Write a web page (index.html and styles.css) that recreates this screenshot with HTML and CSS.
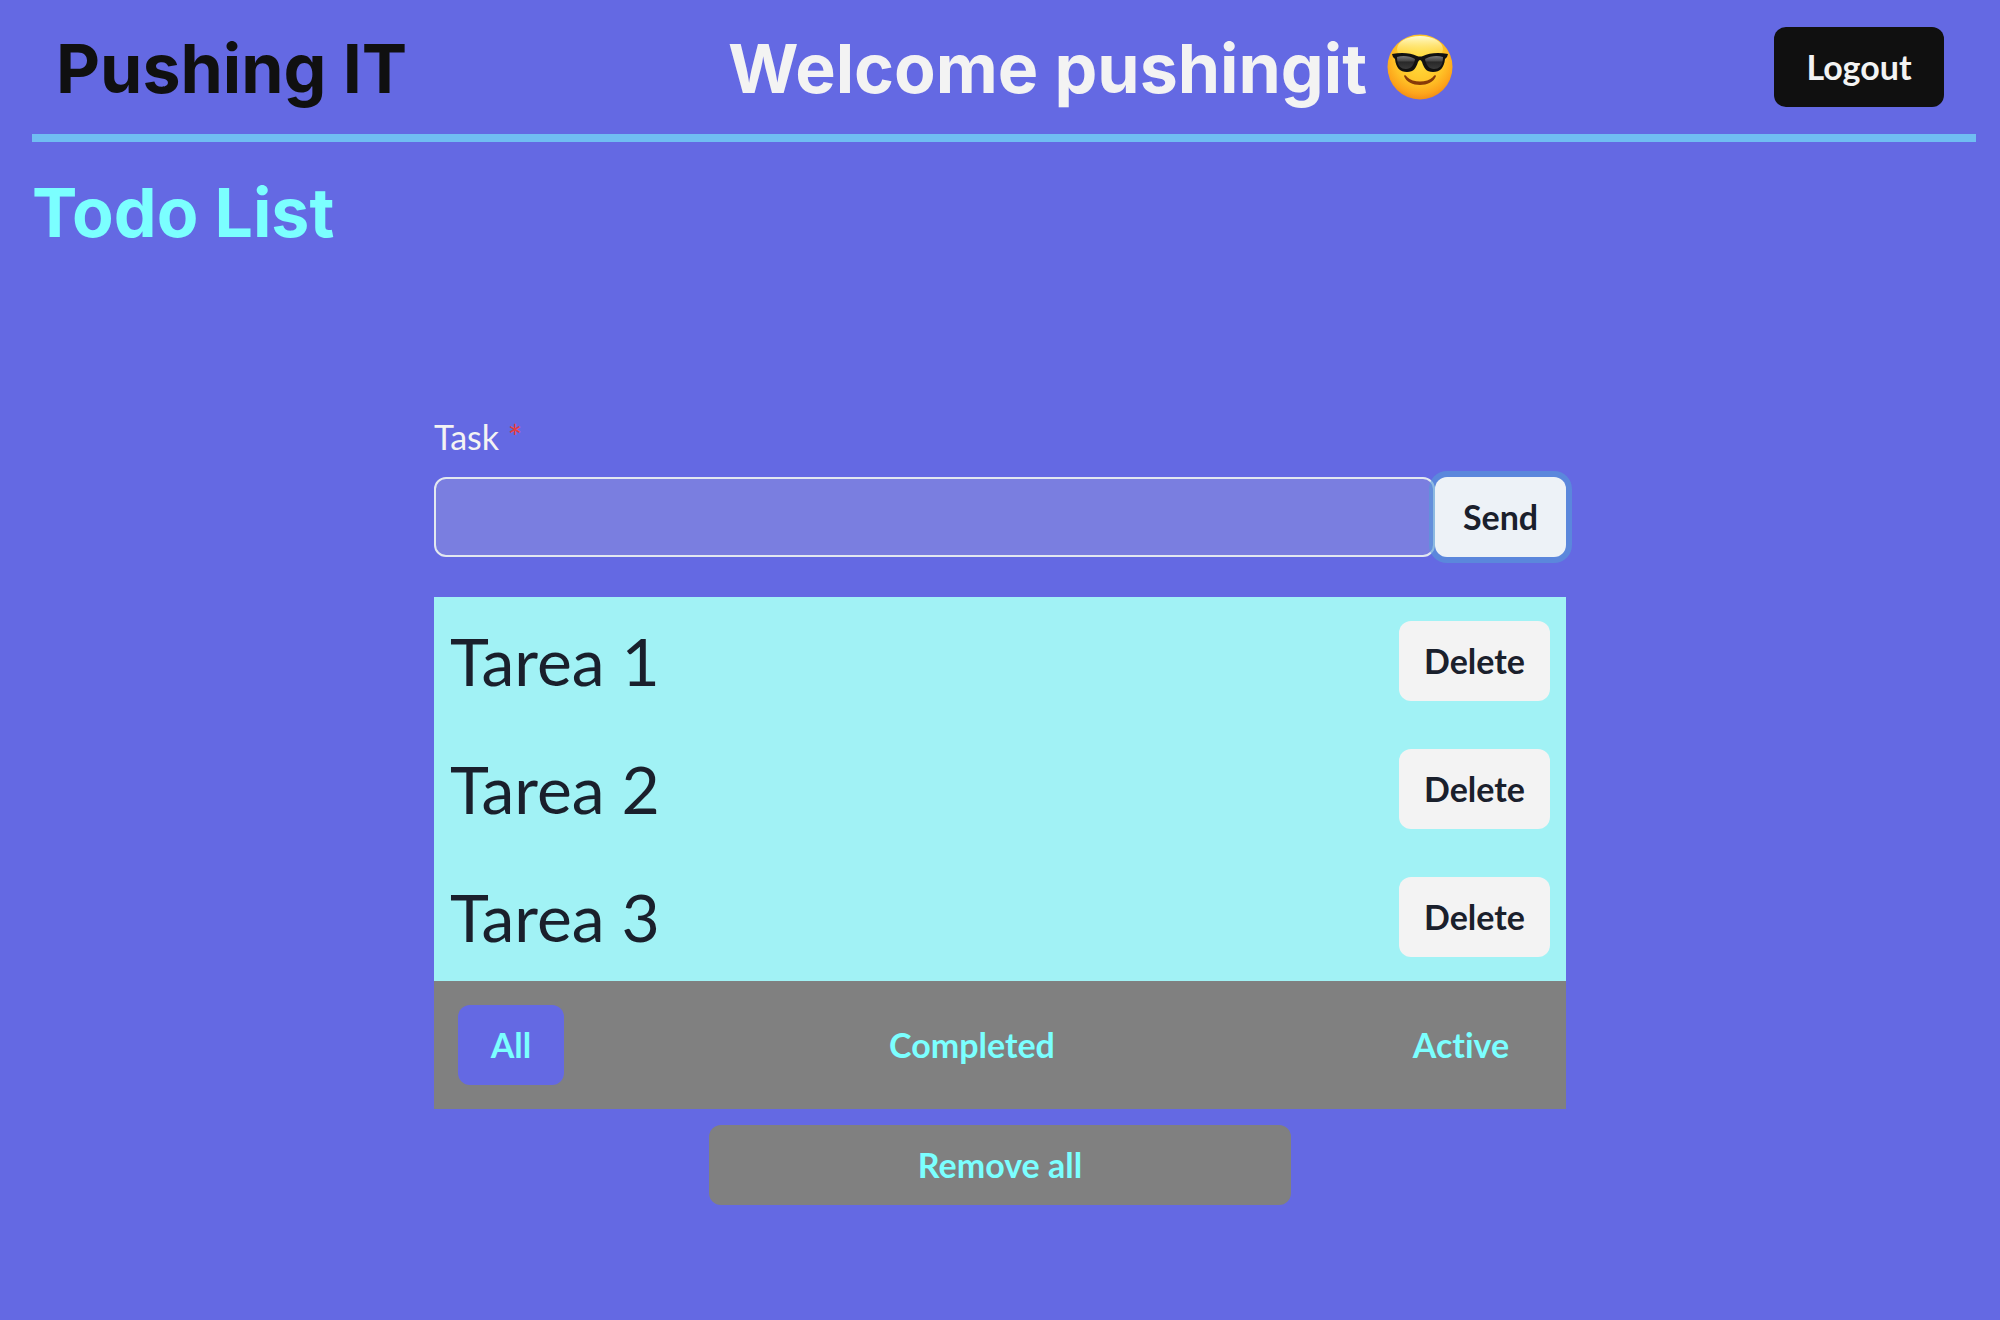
FILE: index.html
```html
<!DOCTYPE html>
<html lang="en">
<head>
  <meta charset="utf-8">
  <meta name="viewport" content="width=device-width, initial-scale=1">
  <title>Pushing IT</title>
  <link rel="stylesheet" href="styles.css">
</head>
<body>
  <header class="header">
    <h1 class="title brand">Pushing IT</h1>
    <div class="greeting">
      <h2 class="title welcome">Welcome pushingit</h2>
      <svg class="emoji" viewBox="0 0 66 66" role="img" aria-label="smiling face with sunglasses">
        <defs>
          <radialGradient id="face" cx="50%" cy="38%" r="63%">
            <stop offset="0" stop-color="#ffdf3e"/>
            <stop offset=".6" stop-color="#ffc327"/>
            <stop offset=".85" stop-color="#fda41b"/>
            <stop offset="1" stop-color="#f18a15"/>
          </radialGradient>
          <linearGradient id="shine" x1="0" y1="0" x2="0" y2="1">
            <stop offset="0" stop-color="#fffdd2"/>
            <stop offset="1" stop-color="#ffe54a" stop-opacity="0"/>
          </linearGradient>
          <linearGradient id="lens" x1="0" y1="0" x2="0" y2="1">
            <stop offset="0" stop-color="#777"/>
            <stop offset=".4" stop-color="#444"/>
            <stop offset=".45" stop-color="#282828"/>
            <stop offset="1" stop-color="#3a3a3a"/>
          </linearGradient>
        </defs>
        <circle cx="33" cy="33" r="32.5" fill="url(#face)"/>
        <ellipse cx="33" cy="15" rx="23" ry="13" fill="url(#shine)"/>
        <path d="M17 42C21 54 45 54 49 42C49 41 47 41 46 43C40 49 26 49 20 43C19 41 17 41 17 42Z" fill="#873a08"/>
        <path d="M5 20C15 18 24 19 30 22Q33 23 36 22C42 19 51 18 61 20L60 23L58 25C57 34 53 38 46 38C39 38 37 34 35 28Q33 24 31 28C29 34 27 38 20 38C13 38 9 34 8 25L6 23Z" fill="#111"/>
        <path d="M10 23C16 21 23 22 28 25C27 31 24 35 19 35C14 35 10 32 10 23ZM56 23C50 21 43 22 38 25C39 31 42 35 47 35C52 35 56 32 56 23Z" fill="url(#lens)"/>
      </svg>
    </div>
    <button class="btn btn-logout" type="button">Logout</button>
  </header>

  <main class="main">
    <h2 class="title section-title">Todo List</h2>

    <div class="todo">
      <form class="task-form">
        <label class="label" for="task">Task <span class="required">*</span></label>
        <div class="field">
          <input class="input" id="task" type="text" required>
          <button class="btn btn-send" type="submit">Send</button>
        </div>
      </form>

      <ul class="list">
        <li class="item"><span>Tarea 1</span><button class="btn btn-delete" type="button">Delete</button></li>
        <li class="item"><span>Tarea 2</span><button class="btn btn-delete" type="button">Delete</button></li>
        <li class="item"><span>Tarea 3</span><button class="btn btn-delete" type="button">Delete</button></li>
      </ul>

      <div class="filters">
        <button class="btn filter filter-on" type="button">All</button>
        <button class="btn filter filter-completed" type="button">Completed</button>
        <button class="btn filter filter-active" type="button">Active</button>
      </div>

      <button class="btn btn-remove" type="button">Remove all</button>
    </div>
  </main>
</body>
</html>
```

FILE: styles.css
```css
:root {
  --violet: #6469e3;
  --aqua: #7bffff;
  --ink: #1a202c;
  --light: #f3f3f3;
  --black: #101010;
  --gray: #808080;
}

* {
  box-sizing: border-box;
}

body {
  margin: 0;
  min-height: 100vh;
  background: var(--violet);
  color: var(--ink);
  font-family: Lato, "Open Sans", sans-serif;
  font-size: 34px;
  font-variant-ligatures: none;
  line-height: 48px;
}

.header {
  display: flex;
  align-items: center;
  justify-content: space-between;
  height: 142px;
  margin: 0 24px 0 32px;
  padding: 0 32px 0 24px;
  border-bottom: 8px solid #70bdf2;
}

.title {
  margin: 0;
  padding-top: 2px;
  font-family: Inter, sans-serif;
  font-size: 68px;
  font-weight: 700;
  line-height: 88px;
}

.brand {
  color: var(--black);
}

.greeting {
  display: flex;
  align-items: center;
  gap: 20px;
}

.welcome {
  color: var(--light);
}

.emoji {
  width: 66px;
  height: 66px;
}

.section-title {
  color: var(--aqua);
}

.main {
  padding: 24px 32px;
}

.btn {
  height: 80px;
  padding: 0 16px;
  border: 0;
  border-radius: 12px;
  color: var(--ink);
  font: inherit;
  font-variant-ligatures: none;
  font-weight: 700;
  cursor: pointer;
}

.btn-logout {
  min-width: 170px;
  background: var(--black);
  color: var(--light);
}

.todo {
  display: flex;
  flex-direction: column;
  width: 100%;
  max-width: 1132px;
  margin: 157px auto 0;
}

.label {
  display: block;
  margin-bottom: 16px;
  color: var(--light);
}

.required {
  color: #e53e3e;
}

.field {
  display: flex;
}

.input {
  flex: 1;
  min-width: 0;
  height: 80px;
  padding: 0 32px;
  border: 2px solid #e2e8f0;
  border-radius: 12px;
  outline: 0;
  background: #7a7ee0;
  color: var(--ink);
  font: inherit;
}

.btn-send {
  min-width: 131px;
  background: #edf2f7;
  box-shadow: 0 0 0 6px rgba(85, 155, 215, .6);
}

.list {
  margin: 40px 0 0;
  padding: 0;
  list-style: none;
  background: #a1f2f5;
}

.item {
  display: flex;
  align-items: center;
  justify-content: space-between;
  height: 128px;
  padding: 0 16px;
  font-size: 66px;
}

.btn-delete {
  min-width: 151px;
  background: var(--light);
  font-size: 34px;
}

.filters {
  display: flex;
  align-items: center;
  justify-content: space-between;
  height: 128px;
  padding: 0 24px;
  background: var(--gray);
}

.filter {
  min-width: 106px;
  background: transparent;
  color: var(--aqua);
}

.filter-on {
  background: var(--violet);
}

.filter-completed {
  min-width: 232px;
}

.filter-active {
  min-width: 162px;
}

.btn-remove {
  align-self: center;
  width: 100%;
  max-width: 582px;
  margin-top: 16px;
  background: var(--gray);
  color: var(--aqua);
}
```
